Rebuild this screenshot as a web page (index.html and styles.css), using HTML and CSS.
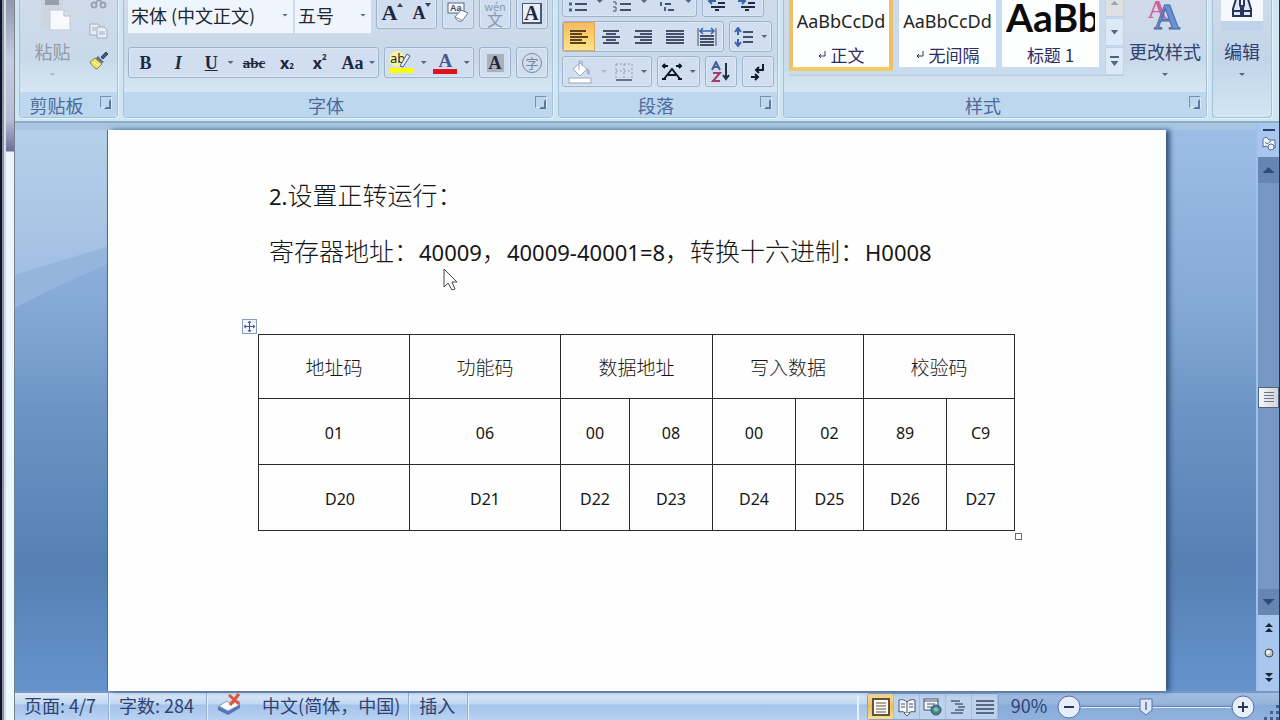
FILE: index.html
```html
<!DOCTYPE html>
<html lang="zh-CN">
<head>
<meta charset="utf-8">
<title>文档</title>
<link rel="stylesheet" href="styles.css">
</head>
<body>
<div class="edge"></div>
<div class="app">
  <header class="ribbon">
    <section class="group clipboard">
      <div class="body">
        <button class="large dim">
          <svg width="40" height="36" viewBox="0 0 40 36"><path d="M8 0h22v32H8z" fill="#cdd5df"/><path d="M12 0h14v9H12z" fill="#9a9ea8"/><path d="M17 14h14l6 6v14H17z" fill="#f7f9fc" stroke="#c3cad6"/><path d="M31 14v6h6" fill="#dde3ec" stroke="#b6bfcd"/></svg>
          <span>粘贴</span><i class="caret pale"></i>
        </button>
        <div class="side">
          <button aria-label="剪切"><svg width="20" height="20" viewBox="0 0 20 20" fill="none" stroke="#98a2b6" stroke-width="2"><path d="M7 12L14 1M13 12L6 1"/><circle cx="5" cy="14" r="2.500"/><circle cx="14" cy="14" r="2.500"/></svg></button>
          <button aria-label="复制"><svg width="20" height="20" viewBox="0 0 20 20" fill="#e8eef6" stroke="#a0acc0"><path d="M1 3h8l3 3v8H1z"/><path d="M8 6h7l3 3v8H8z"/><path d="M3 7h4M3 9h4M10 11h6M10 13h6"/></svg></button>
          <button aria-label="格式刷"><svg width="20" height="20" viewBox="0 0 20 20"><path d="M12 6l5-5 2 2-5 5z" fill="#475a80" stroke="#304060"/><path d="M9 5l6 6-3 2-6-5z" fill="#66748c"/><path d="M6 7l7 6-5 5c-3-1-5-3-7-7z" fill="#e8e36c" stroke="#8c8740"/><path d="M4 11l6 4" stroke="#fffac0"/></svg></button>
        </div>
      </div>
      <footer><span>剪贴板</span><button class="launch" aria-label="剪贴板选项"></button></footer>
    </section>

    <section class="group font">
      <div class="body">
        <div class="row">
          <div class="combos">
            <label class="combo family"><select aria-label="字体"><option>宋体 (中文正文)</option></select><i class="caret"></i></label>
            <label class="combo size"><select aria-label="字号"><option>五号</option></select><i class="caret"></i></label>
          </div>
          <div class="box grow"><button class="serif big">A<svg class="mark" width="6" height="4"><path d="M0 4L3 0L6 4z" fill="#34405c"/></svg></button><button class="serif">A<svg class="mark" width="6" height="4"><path d="M0 0L3 4L6 0z" fill="#34405c"/></svg></button></div>
          <div class="box single"><button aria-label="清除格式"><svg width="24" height="24" viewBox="0 0 24 24"><rect x="2" y="2" width="16" height="10" fill="#f8faff" stroke="#59657e"/><text x="4" y="10" class="tiny">Aa</text><path d="M9 16l6-7 7 3-6 8c-3 1-6-1-7-4z" fill="#fff" stroke="#66799c"/><path d="M9 16l7 3" stroke="#8397b8"/></svg></button></div>
          <div class="box single"><button class="pinyin"><small>wén</small><span>文</span></button></div>
          <div class="box single"><button class="serif"><span class="framed">A</span></button></div>
        </div>
        <div class="row">
          <div class="box style">
            <button class="serif">B</button><button class="serif italic">I</button><button class="serif under">U</button><i class="caret"></i><button class="serif strike">abc</button><button class="script">x<sub>2</sub></button><button class="script">x<sup>2</sup></button><button class="serif">Aa</button><i class="caret"></i>
          </div>
          <div class="box colors">
            <button class="mark-pen" aria-label="突出显示"><svg width="26" height="26" viewBox="0 0 26 26"><circle cx="9" cy="9" r="8" fill="#f5f2a0"/><text x="2" y="13" class="abt">ab</text><path d="M12 16l7-12 3 2-7 11z" fill="#e8eefa" stroke="#465c86"/><path d="M1 18h24v5H1z" fill="#ffff00"/></svg></button><i class="caret"></i>
            <button class="fore">A</button><i class="caret"></i>
          </div>
          <div class="box single"><button class="serif"><span class="shaded">A</span></button></div>
          <div class="box single"><button><span class="circled">字</span></button></div>
        </div>
      </div>
      <footer><span>字体</span><button class="launch" aria-label="字体选项"></button></footer>
    </section>

    <section class="group para">
      <div class="body">
        <div class="row">
          <div class="box lists">
            <button aria-label="项目符号"><svg width="20" height="20" viewBox="0 0 20 20" stroke="#40506e" stroke-width="2"><path d="M7 6h12M7 12h12M7 18h12"/><path d="M1 6h3M1 12h3M1 18h3" stroke="#45609c" stroke-width="3"/></svg></button><i class="caret"></i>
            <button aria-label="编号"><svg width="20" height="20" viewBox="0 0 20 20" stroke="#40506e" stroke-width="2" fill="none"><path d="M8 6h11M8 12h11M8 18h11"/><path d="M2 3v5M1 10h3v3M1 15h3v4H1" stroke-width="1"/></svg></button><i class="caret"></i>
            <button aria-label="多级列表"><svg width="20" height="20" viewBox="0 0 20 20" stroke="#40506e" stroke-width="2" fill="none"><path d="M5 6h12M9 12h6M12 18h6"/><path d="M1 4v4M5 10v4M9 15v4" stroke="#45609c"/></svg></button><i class="caret"></i>
          </div>
          <div class="box indents">
            <button aria-label="减少缩进"><svg width="22" height="20" viewBox="0 0 22 20" stroke="#1f2b44" stroke-width="2" fill="none"><path d="M4 3h16M11 7h9M11 11h7M4 15h14M8 18h4"/><path d="M9 9H2M5 6L2 9l3 3" stroke="#3d62ad"/></svg></button>
            <button aria-label="增加缩进"><svg width="22" height="20" viewBox="0 0 22 20" stroke="#1f2b44" stroke-width="2" fill="none"><path d="M4 3h16M11 7h9M11 11h7M4 15h14M8 18h4"/><path d="M1 9h7M5 6l3 3-3 3" stroke="#3d62ad"/></svg></button>
          </div>
        </div>
        <div class="row">
          <div class="box aligns">
            <button class="on" aria-label="左对齐"><svg width="18" height="16" stroke="#5a4520" stroke-width="2"><path d="M0 2h16M0 5h12M0 8h18M0 11h12M0 14h16"/></svg></button>
            <button aria-label="居中"><svg width="18" height="16" stroke="#42506a" stroke-width="2"><path d="M1 2h16M4 5h10M0 8h18M4 11h10M1 14h16"/></svg></button>
            <button aria-label="右对齐"><svg width="18" height="16" stroke="#42506a" stroke-width="2"><path d="M1 2h17M6 5h12M0 8h18M6 11h12M1 14h17"/></svg></button>
            <button aria-label="两端对齐"><svg width="18" height="16" stroke="#42506a" stroke-width="2"><path d="M0 2h18M0 5h18M0 8h18M0 11h18M0 14h18"/></svg></button>
            <button aria-label="分散对齐"><svg width="20" height="20" viewBox="0 0 20 20" stroke="#42506a" stroke-width="2" fill="none"><path d="M1 1v18M19 1v18" stroke-width="1"/><path d="M3 9h14M3 12h14M3 15h14M3 18h14"/><path d="M3 4h14M6 1L3 4l3 3M14 1l3 3-3 3" stroke="#3d62ad" stroke-width="1.500"/></svg></button>
          </div>
          <div class="box dd"><button aria-label="行距"><svg width="20" height="20" viewBox="0 0 20 20" stroke="#42506a" stroke-width="2" fill="none"><path d="M9 5h10M9 10h10M9 15h10"/><path d="M4 2v6M4 12v6M1 5l3-4 3 4M1 15l3 4 3-4" stroke="#3d62ad"/></svg></button><i class="caret"></i></div>
        </div>
        <div class="row">
          <div class="box fills">
            <button aria-label="底纹"><svg width="26" height="24" viewBox="0 0 26 24"><path d="M6 9l7-6 7 6-7 7z" fill="#fff" stroke="#9aa7bd"/><path d="M12 10V1h3v5" fill="none" stroke="#9aa7bd"/><path d="M20 8c3 2 4 5 2 7-2-1-3-3-2-7z" fill="#a6b3c9"/><rect x="2" y="18" width="22" height="5" fill="#fff" stroke="#9aa7bd"/></svg></button><i class="caret pale"></i>
            <button aria-label="框线"><svg width="18" height="18" viewBox="0 0 18 18" fill="none" stroke="#8f9db5"><path d="M1 1h16M1 8h16M1 1v14M9 1v14M17 1v14" stroke-dasharray="2 2"/><path d="M1 17h16" stroke-width="2" stroke="#66758f"/></svg></button><i class="caret"></i>
          </div>
          <div class="box dd"><button aria-label="中文版式"><svg width="22" height="20" viewBox="0 0 22 20" fill="none" stroke="#0d1422" stroke-width="2"><path d="M3 17L11 7l8 10M7 13h8M1 17h4M17 17h4"/><path d="M2 4h5M4 2L2 4l2 2M20 4h-5M18 2l2 2-2 2"/></svg></button><i class="caret"></i></div>
          <div class="box single"><button aria-label="排序"><svg width="20" height="22" viewBox="0 0 20 22" fill="none" stroke-width="2"><path d="M1 9l4-8 4 8M3 6h5" stroke="#405f92"/><path d="M2 12h7l-7 8h7" stroke="#a83a66"/><path d="M15 2v15M12 14l3 4 3-4" stroke="#222c44"/></svg></button></div>
          <div class="box single"><button aria-label="显示标记"><svg width="18" height="20" viewBox="0 0 18 20" fill="none" stroke="#111a2c" stroke-width="2"><path d="M14 2v6H7M10 5L7 8l3 3M2 15h7M6 12l3 3-3 3"/></svg></button></div>
        </div>
      </div>
      <footer><span>段落</span><button class="launch" aria-label="段落选项"></button></footer>
    </section>

    <section class="group styles">
      <div class="body">
        <div class="gallery">
          <button class="card chosen"><span class="sample">AaBbCcDd</span><span class="name"><svg width="9" height="10" fill="none" stroke="#30354c"><path d="M7 1v5H1M3 4L1 6l2 2"/></svg>正文</span></button>
          <button class="card"><span class="sample">AaBbCcDd</span><span class="name"><svg width="9" height="10" fill="none" stroke="#30354c"><path d="M7 1v5H1M3 4L1 6l2 2"/></svg>无间隔</span></button>
          <button class="card"><span class="sample head">AaBb</span><span class="name">标题 1</span></button>
          <div class="steps"><button class="gray" aria-label="上一行"><i class="caret up"></i></button><button aria-label="下一行"><i class="caret wide"></i></button><button class="more" aria-label="其他"><i class="caret wide"></i></button></div>
        </div>
        <button class="large">
          <svg width="40" height="36" viewBox="0 0 40 36"><text x="3" y="22" class="pinkA">A</text><text x="9" y="33" class="blueA">A</text></svg>
          <span>更改样式</span><i class="caret"></i>
        </button>
      </div>
      <footer><span>样式</span><button class="launch" aria-label="样式窗口"></button></footer>
    </section>

    <section class="group edit">
      <button class="large">
        <span class="tile"><svg width="20" height="22" viewBox="0 0 20 22" fill="#dfe7f5" stroke="#27345c" stroke-width="2"><path d="M4 3h4v6l1 3v8H1v-7zM12 3h4l3 10v7h-8v-8l1-3z"/><path d="M8 10h4M1 15h8M11 15h8"/></svg></span>
        <span>编辑</span><i class="caret"></i>
      </button>
    </section>
  </header>

  <main class="work">
    <svg class="swoosh" viewBox="0 0 400 200" preserveAspectRatio="none">
      <defs><linearGradient id="g" x1="0" y1="0" x2="0" y2="1"><stop offset="0" stop-color="#b4d1e9"/><stop offset="1" stop-color="#a2bfe3"/></linearGradient></defs>
      <path d="M0 0H400V40Q180 90 0 189Z" fill="#96b5dc"/><path d="M0 0H400V30Q180 95 0 154Z" fill="url(#g)"/>
    </svg>
    <article class="page">
      <p>2.<span class="han">设置正转运行：</span></p>
      <p><span class="han">寄存器地址：</span>40009<span class="han">，</span>40009-40001=8<span class="han">，转换十六进制：</span>H0008</p>
      <div class="sheet">
        <svg class="handle" width="15" height="15" viewBox="0 0 15 15" fill="none" stroke="#3e5590"><rect x="0.500" y="0.500" width="14" height="14" fill="#f3f6fc" stroke="#8b9bbd"/><path d="M7.500 3v9M3 7.500h9M6 4l1.500-2L9 4M6 11l1.500 2L9 11M4 6L2 7.500 4 9M11 6l2 1.500L11 9"/></svg>
        <table>
          <colgroup><col class="c1"><col class="c1"><col class="c3"><col class="c4"><col class="c4"><col class="c6"><col class="c4"><col class="c6"></colgroup>
          <tr><th>地址码</th><th>功能码</th><th colspan="2">数据地址</th><th colspan="2">写入数据</th><th colspan="2">校验码</th></tr>
          <tr><td>01</td><td>06</td><td>00</td><td>08</td><td>00</td><td>02</td><td>89</td><td>C9</td></tr>
          <tr><td class="shift">D20</td><td>D21</td><td>D22</td><td>D23</td><td>D24</td><td>D25</td><td>D26</td><td>D27</td></tr>
        </table>
        <span class="grab"></span>
      </div>
      <svg class="cursor" width="16" height="24" viewBox="0 0 16 24"><path d="M1 1v18l4-4 4 7 3-1-3-7h5z" fill="#fff" stroke="#454545"/></svg>
    </article>
    <aside class="scroll">
      <span class="split"></span>
      <button class="ruler" aria-label="标尺"><svg width="16" height="16" viewBox="0 0 16 16" fill="#f2f7fd" stroke="#4e6c98"><path d="M2 3l3-2 3 3h6v8H8l-3-2-3 1z"/><circle cx="10" cy="11" r="3"/><path d="M4 6l2 2 4-3"/></svg></button>
      <div class="track"><button aria-label="向上滚动"><i class="arrow up"></i></button><span class="thumb"><svg width="10" height="11" stroke="#6d7784"><path d="M0 .5h10M0 3.500h10M0 6.500h10M0 9.500h10"/></svg></span><button aria-label="向下滚动"><i class="arrow"></i></button></div>
      <div class="browse">
        <button aria-label="上一页"><svg width="8" height="10" fill="#18253f"><path d="M4 0l4 4H0zM4 5l4 4H0z"/></svg></button>
        <button aria-label="选择浏览对象"><svg width="10" height="10"><circle cx="5" cy="5" r="4" fill="#bfc4c4" stroke="#3c4554"/><circle cx="4" cy="4" r="2" fill="#f5f5ee"/></svg></button>
        <button aria-label="下一页"><svg width="8" height="10" fill="#18253f"><path d="M0 0h8L4 4zM0 5h8L4 9z"/></svg></button>
      </div>
    </aside>
  </main>

  <footer class="status">
    <span class="cell">页面: 4/7</span>
    <span class="cell">字数: 284</span>
    <span class="cell lang"><svg width="25" height="24" viewBox="0 0 25 24"><path d="M1 14l9-4 4 3 9-3v5l-12 7L1 17z" fill="#5277b4"/><path d="M2 13l8-5 4 3 8-3v4l-11 6z" fill="#fff" stroke="#8a9cc0"/><path d="M12 2l10 9M22 1l-9 11" stroke="#e2533a" stroke-width="3"/></svg>中文(简体，中国)</span>
    <span class="cell">插入</span>
    <span class="spacer"></span>
    <div class="views">
      <button class="on" aria-label="页面视图"><svg width="18" height="18" fill="#fffdf3" stroke="#5e5340"><rect x="1" y="1" width="16" height="16" stroke-width="2"/><path d="M4 5h10M4 8h10M4 11h10M4 14h10"/></svg></button>
      <button aria-label="阅读版式"><svg width="18" height="18" fill="#f4f7fb" stroke="#46536b"><path d="M1 2c3-1 6 0 8 2 2-2 5-3 8-2v12c-3-1-6 0-8 2-2-2-5-3-8-2zM9 4v12M3 6h4M3 9h4M11 6h4M11 9h4"/><path d="M6 15l3 3 3-3"/></svg></button>
      <button aria-label="Web 版式"><svg width="20" height="18"><rect x="1" y="1" width="14" height="11" fill="#f4f7fb" stroke="#46536b"/><path d="M1 3h14M4 6h8M4 9h6" stroke="#46536b"/><circle cx="13" cy="12" r="5" fill="#3d8790" stroke="#2b4e78"/><path d="M10 11l3-2 3 3-3 2z" fill="#8bc295"/></svg></button>
      <button aria-label="大纲视图"><svg width="16" height="16" stroke="#6d7c96" stroke-width="2"><path d="M0 2h9M4 5h8M7 8h7M4 11h9M0 14h12"/></svg></button>
      <button aria-label="普通视图"><svg width="18" height="16" stroke="#5a6880" stroke-width="2"><path d="M0 2h18M0 6h18M0 10h18M0 14h18"/></svg></button>
    </div>
    <button class="pct">90%</button>
    <button class="zoom" aria-label="缩小"><svg width="24" height="24"><circle cx="12" cy="12" r="11" fill="#e6eefa" stroke="#5b6f98"/><path d="M7 12h10" stroke="#2d3753" stroke-width="2"/></svg></button>
    <div class="rail"><svg width="14" height="18" viewBox="0 0 14 18"><path d="M1 1h12v11l-6 5-6-5z" fill="#dbe7f8" stroke="#5b6f98"/><path d="M7 4v8" stroke="#7b8fb4" stroke-width="2"/></svg></div>
    <button class="zoom" aria-label="放大"><svg width="24" height="24"><circle cx="12" cy="12" r="11" fill="#e6eefa" stroke="#5b6f98"/><path d="M7 12h10M12 7v10" stroke="#2d3753" stroke-width="2"/></svg></button>
    <svg class="grip" width="15" height="15" fill="#44618f"><path d="M12 0h3v3h-3zM6 6h3v3H6zM12 6h3v3h-3zM0 12h3v3H0zM6 12h3v3H6zM12 12h3v3h-3z"/></svg>
  </footer>
</div>
</body>
</html>
```

FILE: styles.css
```css
* { box-sizing: border-box; }
html, body { height: 100%; }
body {
  margin: 0;
  display: flex;
  overflow: hidden;
  font: 18px/24px "Noto Sans CJK SC", sans-serif;
  color: #2f4272;
}
button, select { font: inherit; color: inherit; border: 0; padding: 0; margin: 0; background: none; }
button { display: flex; align-items: center; justify-content: center; }
svg { display: block; flex: none; }

.edge {
  flex: none;
  width: 15px;
  border-left: 2px solid #0b1430;
  border-right: 1px solid #75808c;
  background: linear-gradient(90deg, #8b9099 0 2px, #d8dde2 2px 4px, transparent 4px),
    linear-gradient(#8f98ae 0, #c3cede 60px, #b5bdd6 120px, #6c6f9c 151px, #eaf5fc 152px, #eafafd 100%);
}
.app { flex: 1; min-width: 0; display: flex; flex-direction: column; border-right: 1px solid #1c3354; }

.ribbon {
  flex: none;
  height: 123px;
  display: flex;
  gap: 5px;
  padding: 0 7px 4px 4px;
  background: #cfe6f2;
  border-bottom: 2px solid #86aec4;
  overflow: hidden;
}
.group {
  display: flex;
  flex-direction: column;
  justify-content: flex-end;
  height: 118px;
  border: 1px solid #a5c1d8;
  border-top: 0;
  border-radius: 0 0 4px 4px;
  background: linear-gradient(#d0dbe9, #c8d9ea 50%, #d6e6f2 92px);
  box-shadow: 1px 1px 0 #e4f4fb;
}
.clipboard { width: 99px; }
.font { width: 430px; }
.para { width: 220px; }
.styles { flex: 1; min-width: 0; }
.edit { width: 60px; padding-bottom: 41px; background: linear-gradient(#d0dbe9, #c2d4e8 50%, #d2e6f4); }
.group footer {
  flex: none;
  height: 25px;
  display: flex;
  align-items: center;
  padding: 0 5px;
  background: #bdd7ee;
  color: #4e6a9a;
}
.group footer span { flex: 1; text-align: center; padding-right: 12px; }
.launch { width: 12px; height: 12px; align-self: flex-start; margin-top: 4px; border: 1px solid #7890b4; border-right-color: #dcebf7; border-bottom-color: #dcebf7; }
.launch::after { content: ""; width: 6px; height: 6px; margin: 3px 0 0 3px; border: 2px solid #5f779f; border-top-color: transparent; border-left-color: transparent; }

.body { display: flex; align-items: flex-end; }
.caret { flex: none; width: 6px; height: 3px; background: #566684; clip-path: polygon(0 0, 100% 0, 50% 100%); }
.caret.up { clip-path: polygon(50% 0, 100% 100%, 0 100%); width: 8px; height: 4px; background: #9ca3ad; }
.caret.wide { width: 8px; height: 5px; }
.caret.pale { background: #aebccf; }

.large { flex-direction: column; gap: 4px; }
.large > .caret { margin-top: 6px; }
.large > svg { margin-bottom: 3px; }
.dim { color: #929aa8; }
.clipboard .body { padding: 0 8px 16px 10px; gap: 14px; }
.clipboard .large { width: 48px; }
.clipboard .side { display: flex; flex-direction: column; gap: 10px; padding-bottom: 5px; }

.row { display: flex; gap: 5px; }
.font .body, .para .body { flex-direction: column; align-items: stretch; }
.font .body { padding: 0 4px 14px; gap: 14px; }
.para .body { padding: 0 3px 5px; gap: 4px; }
.box { display: flex; align-items: center; border: 1px solid #9db2cc; border-radius: 3px; background: #d0deef; color: #1d2942; height: 31px; box-shadow: inset 0 0 0 1px #dbe8f5; }
.single { width: 32px; justify-content: center; }
.combos { flex: 1; display: flex; gap: 2px; }
.combo { display: flex; align-items: center; background: #eef5fd; height: 36px; color: #22262e; padding: 0 5px 0 3px; }
.combo select { flex: 1; min-width: 0; appearance: none; outline: 0; }
.family { flex: 1; }
.size { width: 76px; }
.font .row:first-child .box { height: 32px; }
.grow { width: 61px; justify-content: space-around; }
.serif { font: bold 18px/20px "Liberation Serif", serif; }
.big { font-size: 22px; }
.mark { align-self: flex-start; }
.tiny { font: bold 9px "Liberation Sans", sans-serif; fill: #3c465c; }
.abt { font: 13px "Noto Sans", sans-serif; fill: #1f2740; }
.pinyin { flex-direction: column; color: #8c99b0; font-size: 16px; line-height: 14px; }
.pinyin small { font-size: 11px; line-height: 11px; }
.framed { border: 1px solid #4c5a74; border-right-width: 2px; border-bottom-width: 2px; background: #e8eff8; width: 20px; font-size: 20px; line-height: 18px; }
.shaded { background: #adb1b7; width: 17px; line-height: 18px; font-size: 18px; }
.circled { width: 20px; height: 20px; border: 1px solid #7786a0; border-radius: 50%; color: #7786a0; font-size: 13px; line-height: 17px; }
.style { flex: 1; padding-right: 3px; }
.style button { flex: 1; }
.italic { font-style: italic; }
.under { text-decoration: underline; }
.style .strike { text-decoration: line-through; font-size: 15px; margin-left: 4px; }
.script { font: bold 16px/20px "Noto Sans", sans-serif; align-items: baseline; }
.script sub, .script sup { font-size: 8px; line-height: 8px; }
.script sup { align-self: flex-start; }
.colors { width: 90px; justify-content: space-around; }
.fore { width: 24px; font: bold 19px/17px "Liberation Serif", serif; color: #44598c; border-bottom: 5px solid #e0101c; height: 23px; align-self: flex-end; margin-bottom: 3px; }

.lists { width: 135px; justify-content: space-around; }
.indents { width: 62px; justify-content: space-around; }
.aligns { width: 162px; }
.aligns button { flex: 1; height: 29px; }
.aligns .on { background: linear-gradient(#f6b764, #fcd06c 50%, #fbe690); box-shadow: inset 0 0 0 1px #e0a850; }
.dd { width: 43px; justify-content: space-around; }
.fills { width: 90px; justify-content: space-around; }

.styles .body { justify-content: space-between; padding: 0 4px 16px 5px; }
.gallery { display: flex; align-items: flex-end; gap: 6px; height: 80px; border-bottom: 1px solid #b8cde0; background: #c9dcef; }
.card { flex-direction: column; justify-content: flex-end; width: 97px; height: 76px; margin-bottom: 8px; background: #fdfefe; overflow: hidden; padding: 0 4px; color: #2c2d62; }
.card.chosen { width: 104px; height: 80px; border: 4px solid #efc25c; border-color: #dfa94e #efc068 #f2cb62; margin-bottom: 4px; padding: 0; }
.sample { font: 18px/24px "Noto Sans", sans-serif; color: #252525; margin-bottom: 10px; max-width: 100%; }
.sample.head { font: bold 39px/40px Lato, sans-serif; color: #0c0c0c; margin-bottom: 6px; width: 90px; text-align: left; overflow: hidden; }
.name { display: flex; align-items: center; gap: 4px; font-size: 17px; line-height: 24px; }
.steps { display: flex; flex-direction: column; width: 19px; gap: 1px; }
.steps button { height: 28px; background: #dce9f7; border: 1px solid #c0d3e8; }
.steps .gray { background: #dfe0e2; }
.steps .more { flex-direction: column; gap: 3px; }
.more::before { content: ""; width: 9px; height: 2px; background: #50617f; }
.pinkA { font: bold 26px "Liberation Serif", serif; fill: #cf5f9e; }
.blueA { font: bold 36px "Liberation Serif", serif; fill: #6c8fd0; stroke: #4569ab; }
.styles .large { width: 74px; }
.edit .tile { width: 42px; height: 40px; display: flex; align-items: center; justify-content: center; background: linear-gradient(#f5f9fe 75%, #bfd3ea 75%); margin-bottom: 4px; }
.edit .tile svg { margin-bottom: 8px; }

.work { flex: 1; min-height: 0; display: flex; position: relative; background: linear-gradient(#9cbee6, #86aad6 30%, #6c95c5 50%, #5680b3 78%, #6593cc); border-top: 7px solid #a9c5e3; }
.swoosh { position: absolute; left: 0; top: 0; width: 400px; height: 188px; }
.page { flex: 1; min-width: 0; position: relative; margin: 0 90px 0 93px; padding: 42px 151px 0 150px; background: #fdfefd; color: #151515; box-shadow: 4px 0 5px #36577f, -1px 0 0 #4f6d93; font: 22px/48px "Noto Sans", sans-serif; }
.page p { margin: 0 0 8px; padding-left: 11px; height: 48px; white-space: nowrap; }
.han { font: 300 25px/44px "Noto Sans CJK SC", sans-serif; }
.sheet { position: relative; margin-top: 58px; }
table { width: 100%; border-collapse: collapse; table-layout: fixed; }
th, td { border: 1px solid #2a2a2a; padding: 2px 0 0; text-align: center; font: 16px/24px "Noto Sans", sans-serif; height: 66px; }
th { font: 300 19px/24px "Noto Sans CJK SC", sans-serif; height: 64px; padding: 0; }
td.shift { padding-left: 12px; }
.c1 { width: 151px; }
.c3 { width: 69px; }
.c4 { width: 83px; }
.c6 { width: 68px; }
.handle { position: absolute; left: -16px; top: -15px; }
.grab { position: absolute; right: -7px; bottom: -9px; width: 7px; height: 7px; border: 1px solid #6d6d6d; background: #fff; }
.cursor { position: absolute; left: 335px; top: 138px; }

.scroll { flex: none; width: 23px; margin-top: -7px; display: flex; flex-direction: column; align-items: center; background: #a9c7ee; border-left: 2px solid #9dc1f0; position: relative; }
.split { width: 12px; height: 2px; background: #24406c; margin-top: 6px; }
.ruler { height: 26px; }
.track { flex: 1; align-self: stretch; display: flex; flex-direction: column; align-items: center; justify-content: space-between; background: #7798c2; }
.track button { height: 26px; width: 100%; background: #6685b0; }
.arrow { width: 12px; height: 6px; background: #2c4c80; clip-path: polygon(0 0, 100% 0, 50% 100%); }
.arrow.up { clip-path: polygon(50% 0, 100% 100%, 0 100%); }
.thumb { width: 21px; height: 21px; margin-top: 22px; display: flex; align-items: center; justify-content: center; background: linear-gradient(90deg, #f4f7fa, #cfd5dc); border: 1px solid #4e6481; }
.browse { height: 76px; display: flex; flex-direction: column; justify-content: space-around; align-items: center; }

.status {
  flex: none;
  height: 29px;
  display: flex;
  align-items: center;
  border-top: 2px solid #7797c4;
  background: linear-gradient(90deg, transparent 67%, #6f96cb88 72%), linear-gradient(#dce9f9, #c2d8f2 40%, #a5c3ea 45%, #b8d2f2);
  padding-left: 9px;
  white-space: nowrap;
}
.cell { display: flex; align-items: center; gap: 20px; padding: 0 12px 3px 0; margin-right: 10px; border-right: 1px solid #93b1da; box-shadow: 1px 0 0 #e2eefb; height: 27px; }
.cell.lang { padding-right: 8px; }
.spacer { flex: 1; align-self: stretch; border-right: 2px solid #e6f1fd; margin-right: 8px; }
.views { display: flex; height: 27px; border: 1px solid #89a4ca; background: #bdd2ec; border-radius: 3px; }
.views button { width: 26px; border-right: 1px solid #a6bfdf; }
.views .on { background: linear-gradient(#f8dc9c, #f0bd5b 50%, #fae08c); }
.pct { width: 36px; margin: 0 10px 0 12px; padding-bottom: 3px; }
.rail { flex: none; width: 150px; height: 18px; display: flex; justify-content: center; padding-right: 20px; background: linear-gradient(transparent 8px, #6684b4 8px, #6684b4 9px, #e4effb 9px, #e4effb 10px, transparent 10px); }
.grip { margin-left: 9px; align-self: flex-end; }
```
